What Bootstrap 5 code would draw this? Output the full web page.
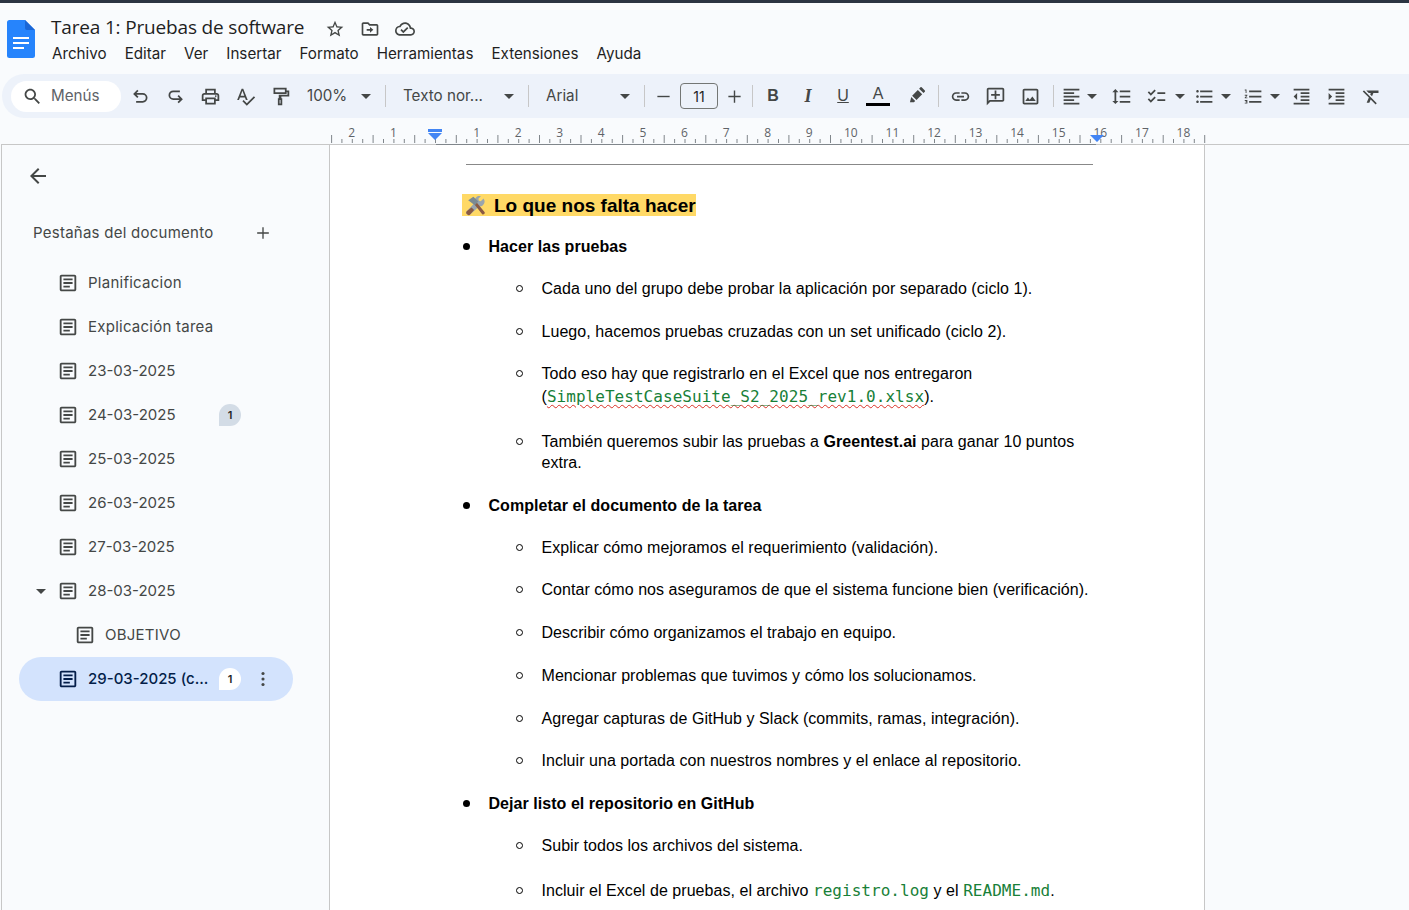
<!DOCTYPE html>
<html lang="es">
<head>
  <meta charset="UTF-8">
  <meta name="viewport" content="width=device-width, initial-scale=1.0">
  <title>Tarea 1: Pruebas de software</title>
  <link href="https://cdn.jsdelivr.net/npm/bootstrap@5.3.0/dist/css/bootstrap.min.css" rel="stylesheet">
  <style>
    html, body { height: 100%; }
    body { background: #f9fbfd; overflow: hidden; font-family: Inter, "Open Sans", sans-serif; color: #444746; border-top: 3px solid #2b3442; }
    .ico { width: 21px; height: 21px; fill: #444746; flex: none; display: block; }

    /* cabecera */
    .top-head { height: 71px; }
    .logo-box { width: 51px; padding: 17px 0 0 7px; }
    .doc-logo { width: 28px; height: 38px; display: block; }
    .doc-title { font-family: "Open Sans", sans-serif; font-size: 19px; line-height: 24px; color: #1f1f1f; margin: 12px 0 0 0; font-weight: 400; letter-spacing: -.17px; }
    .title-icons { margin-left: 21px; gap: 15px; margin-top: 16px; }
    .title-icons .ico { width: 20px; height: 20px; }
    .menu-row { gap: 18px; margin: 5px 0 0 1px; font-size: 15.2px; line-height: 20px; color: #1f1f1f; }

    /* barra de herramientas */
    .tool-bar { height: 44px; margin-left: 2px; background: #edf2fa; border-radius: 22px 0 0 22px; }
    .search-pill { width: 110px; height: 31px; margin: 0 1.5px 0 9px; background: #fff; border-radius: 16px; padding-left: 11px; font-size: 15.2px; color: #5f6368; gap: 8px; }
    .tool-btn { width: 35px; height: 44px; flex: none; }
    .tool-narrow { width: 24px; }
    .caret-down { width: 0; height: 0; border-left: 5px solid transparent; border-right: 5px solid transparent; border-top: 5px solid #444746; flex: none; }
    .tool-sep { width: 1px; height: 22px; background: #c7c7c7; flex: none; }
    .drop-box { height: 44px; font-size: 15.2px; flex: none; padding-right: 5px; }
    .drop-zoom { width: 78.5px; padding-left: 9.5px; }
    .drop-style { width: 124px; padding-left: 8px; margin-left: 9px; }
    .drop-font { width: 97px; padding-left: 8px; margin-left: 9px; }
    .sep-a { margin-left: 9px; }
    .size-step { width: 18px; height: 44px; flex: none; }
    .step-minus { margin-left: 9px; }
    .step-plus { margin-left: 7px; }
    .size-box { width: 38px; height: 26px; margin-left: 8px; border: 1px solid #747775; border-radius: 4px; font-size: 14px; color: #1f1f1f; flex: none; }
    .fmt-letter { font-family: "Liberation Sans", Arial, sans-serif; font-size: 16px; color: #444746; }
    .fmt-italic { font-family: "Liberation Serif", serif; font-size: 18px; }
    .color-a { line-height: 16px; border-bottom: 3px solid #000; width: 24px; text-align: center; padding-bottom: 1px; }
    .ms-b { margin-left: 2.5px; }
    .ms-hl { margin-left: 3px; }
    .ms-c { margin-left: 4.5px; }
    .ms-c2 { margin-left: 3.5px; }
    .ms-d { margin-left: 5.5px; }
    .ms-e { margin-left: 5.5px; }
    .ms-g { margin-left: 7px; }
    .ms-h { margin-left: 1px; }
    .ms-i { margin-left: 7.5px; }
    .ms-i2 { margin-left: 10px; }
    .ms-k { margin-left: 3.5px; }
    .caret-gap { margin-left: 3px; }
    .caret-gap-b { margin-left: 5px; }

    /* regla */
    .ruler-wrap { height: 27px; flex: none; }
    .ruler-svg { display: block; width: 1409px; height: 27px; }
    .ruler-svg text { font-family: "Open Sans", sans-serif; font-size: 12px; fill: #5f6368; text-anchor: middle; }

    /* panel lateral */
    .work-area { height: calc(100% - 142px); }
    .side-panel { width: 329px; margin-left: 1px; border-left: 1px solid #c7c7c7; border-right: 1px solid #c7c7c7; flex: none; font-size: 15px; }
    .back-box { height: 61px; padding: 19px 0 0 24px; }
    .back-box .ico { width: 24px; height: 24px; }
    .tabs-head { height: 52px; padding: 2px 56px 0 31px; font-size: 15px; margin-bottom: 3px; }
    .plus-sign { width: 20px; height: 20px; }
    .name-wide { letter-spacing: .25px; }
    .tab-row { height: 44px; padding-left: 55px; gap: 9px; color: #444746; white-space: nowrap; }
    .tab-row .ico { width: 22px; height: 22px; }
    .tab-open { padding-left: 34px; }
    .tab-open .caret-down { margin-right: 2px; }
    .tab-child { padding-left: 72px; }
    .tab-text { width: 122px; }
    .note-badge { width: 22px; height: 22px; background: #d3dce6; border-radius: 50% 50% 50% 0; font-size: 11px; font-weight: 600; color: #1f1f1f; flex: none; }
    .tab-active { margin-left: 17px; width: 274px; padding-left: 38px; background: #d3e3fd; border-radius: 22px; color: #041e49; font-weight: 500; }
    .tab-active .ico { fill: #041e49; }
    .tab-active .note-badge { background: #fff; }
    .tab-row .dots-btn { margin-left: 2px; width: 22px; height: 22px; fill: #444746; }

    /* hoja */
    .doc-page { width: 875px; background: #fff; border-right: 1px solid #c7c7c7; padding: 19px 111px 0 132px; flex: none; font-family: "Liberation Sans", Arial, sans-serif; font-size: 16px; letter-spacing: .05px; color: #000; overflow: hidden; }
    .doc-rule { height: 1px; background: #888; margin: 0 0 29px 4px; }
    .doc-heading { display: inline-flex; align-items: center; height: 22px; background: #ffd966; font-weight: 700; font-size: 19px; letter-spacing: 0; line-height: 22px; padding: 1px 0 0 4px; margin-bottom: 20px; }
    .tools-emoji { width: 20px; height: 20px; margin-right: 8px; flex: none; }
    .doc-list, .doc-sub { list-style: none; margin: 0; padding: 0; }
    .doc-list > li { padding-left: 26.5px; font-weight: 700; line-height: 21px; margin-bottom: 21px; }
    .doc-list > li::before { content: ""; display: inline-block; width: 7px; height: 7px; border-radius: 50%; background: #000; margin: 0 18.5px 2px -25.5px; }
    .doc-sub { margin-top: 21px; font-weight: 400; }
    .doc-sub > li { padding-left: 53px; margin-bottom: 21.7px; line-height: 21px; }
    .doc-sub > li::before { content: ""; display: inline-block; width: 7px; height: 7px; border-radius: 50%; border: 1px solid #000; margin: 0 18.5px 2px -25.5px; }
    .code-txt { font-family: "DejaVu Sans Mono", "Liberation Mono", monospace; font-size: 16px; letter-spacing: .04px; line-height: 25px; color: #188038; }
    .spell-err { text-decoration: underline wavy #d93025 1px; text-underline-offset: 2px; }
  </style>
</head>
<body>
  <svg width="0" height="0" class="d-none">
    <symbol id="i-search" viewBox="0 0 24 24"><path d="M15.5 14h-.79l-.28-.27C15.41 12.59 16 11.11 16 9.5 16 5.91 13.09 3 9.5 3S3 5.91 3 9.5 5.91 16 9.5 16c1.61 0 3.09-.59 4.23-1.57l.27.28v.79l5 4.99L20.49 19l-4.99-5zm-6 0C7.01 14 5 11.99 5 9.5S7.01 5 9.5 5 14 7.01 14 9.5 11.99 14 9.5 14z"/></symbol>
    <symbol id="i-undo" viewBox="0 0 24 24"><path fill="none" stroke="#444746" stroke-width="2" d="M9 5 5 9l4 4M5 9h9.5a4.500 4.500 0 0 1 0 9H7"/></symbol>
    <symbol id="i-redo" viewBox="0 0 24 24"><path fill="none" stroke="#444746" stroke-width="2" d="m15 11 4 4-4 4M19 15H9.500a4.500 4.500 0 0 1 0-9H17"/></symbol>
    <symbol id="i-print" viewBox="0 0 24 24"><path d="M19 8h-1V3H6v5H5c-1.660 0-3 1.340-3 3v6h4v4h12v-4h4v-6c0-1.660-1.340-3-3-3zM8 5h8v3H8V5zm8 12v2H8v-4h8v2zm2-2v-2H6v2H4v-4c0-.55.45-1 1-1h14c.55 0 1 .45 1 1v4h-2z"/><circle cx="18" cy="11.500" r="1"/></symbol>
    <symbol id="i-spell" viewBox="0 0 24 24"><path d="M12.450 16h2.090L9.430 3H7.570L2.460 16h2.090l1.120-3h5.640l1.140 3zm-6.020-5L8.500 5.480 10.570 11H6.430zm15.160.59-8.090 8.090L9.830 16l-1.410 1.410 5.090 5.090L23 13l-1.410-1.410z"/></symbol>
    <symbol id="i-paint" viewBox="0 0 24 24"><path d="M4 2h15v7H4zm2 2v3h11V4zM19 5h3v7h-9v2h1v8H9v-8h1V10h10V7h-1zM11 16v4h1v-4z" fill-rule="evenodd"/></symbol>
    <symbol id="i-star" viewBox="0 0 24 24"><path d="m22 9.240-7.190-.62L12 2 9.190 8.630 2 9.240l5.460 4.730L5.820 21 12 17.270 18.180 21l-1.630-7.030L22 9.240zM12 15.400l-3.760 2.270 1-4.280-3.320-2.880 4.380-.38L12 6.100l1.710 4.040 4.380.38-3.320 2.880 1 4.280L12 15.400z"/></symbol>
    <symbol id="i-move" viewBox="0 0 24 24"><path d="M20 6h-8l-2-2H4c-1.100 0-2 .9-2 2v12c0 1.100.9 2 2 2h16c1.100 0 2-.9 2-2V8c0-1.100-.9-2-2-2zm0 12H4V6h5.170l2 2H20v10zm-8-4H8v-2h4V9.500l4 3.500-4 3.500V14z"/></symbol>
    <symbol id="i-cloud" viewBox="0 0 24 24"><path d="M19.350 10.040C18.670 6.590 15.640 4 12 4 9.110 4 6.600 5.640 5.350 8.040 2.340 8.360 0 10.910 0 14c0 3.310 2.690 6 6 6h13c2.760 0 5-2.240 5-5 0-2.640-2.050-4.780-4.650-4.960zM19 18H6c-2.210 0-4-1.790-4-4 0-2.050 1.530-3.760 3.560-3.970l1.070-.11.5-.95C8.080 7.140 9.940 6 12 6c2.620 0 4.880 1.860 5.390 4.430l.3 1.500 1.530.11c1.560.1 2.780 1.410 2.780 2.960 0 1.650-1.350 3-3 3zm-9-3.820-2.090-2.090L6.500 13.500 10 17l6.010-6.010-1.410-1.410z"/></symbol>
    <symbol id="i-marker" viewBox="0 0 24 24"><path d="m13.500 4.500 5 5-6.500 6.500-5-5zM15 3l1.500-1.500a1 1 0 0 1 1.400 0l3.600 3.600a1 1 0 0 1 0 1.400L20 8zM6 12.500l4.500 4.500-1.500 1.500H4.500z"/></symbol>
    <symbol id="i-link" viewBox="0 0 24 24"><path d="M3.900 12c0-1.710 1.390-3.100 3.100-3.100h4V7H7c-2.760 0-5 2.240-5 5s2.240 5 5 5h4v-1.900H7c-1.710 0-3.100-1.390-3.100-3.100zM8 13h8v-2H8v2zm9-6h-4v1.900h4c1.710 0 3.100 1.390 3.100 3.100s-1.390 3.100-3.100 3.100h-4V17h4c2.760 0 5-2.240 5-5s-2.240-5-5-5z"/></symbol>
    <symbol id="i-comment" viewBox="0 0 24 24"><path d="M20 2H4c-1.100 0-2 .9-2 2v18l4-4h14c1.100 0 2-.9 2-2V4c0-1.100-.9-2-2-2zm0 14H5.170L4 17.170V4h16v12zM11 5h2v4h4v2h-4v4h-2v-4H7V9h4z"/></symbol>
    <symbol id="i-image" viewBox="0 0 24 24"><path d="M19 5v14H5V5h14m0-2H5c-1.100 0-2 .9-2 2v14c0 1.100.9 2 2 2h14c1.100 0 2-.9 2-2V5c0-1.100-.9-2-2-2zm-4.860 8.860-3 3.870L9 13.140 6 17h12l-3.860-5.140z"/></symbol>
    <symbol id="i-align" viewBox="0 0 24 24"><path d="M15 15H3v2h12v-2zm0-8H3v2h12V7zM3 13h18v-2H3v2zm0 8h18v-2H3v2zM3 3v2h18V3H3z"/></symbol>
    <symbol id="i-spacing" viewBox="0 0 24 24"><path d="M6 7h2.500L5 3.500 1.500 7H4v10H1.500L5 20.500 8.500 17H6V7zm4-2v2h12V5H10zm0 14h12v-2H10v2zm0-6h12v-2H10v2z"/></symbol>
    <symbol id="i-check" viewBox="0 0 24 24"><path d="M22 7h-9v2h9V7zm0 8h-9v2h9v-2zM5.540 11 2 7.460l1.410-1.410 2.120 2.120 4.240-4.240 1.410 1.410L5.540 11zm0 8L2 15.460l1.410-1.410 2.120 2.120 4.240-4.240 1.410 1.410L5.540 19z"/></symbol>
    <symbol id="i-bullets" viewBox="0 0 24 24"><path d="M4 10.500c-.83 0-1.500.67-1.500 1.500s.67 1.500 1.500 1.500 1.500-.67 1.500-1.500-.67-1.500-1.500-1.500zm0-6c-.83 0-1.500.67-1.500 1.500S3.170 7.500 4 7.500 5.500 6.830 5.500 6 4.830 4.500 4 4.500zm0 12c-.83 0-1.500.68-1.500 1.500s.68 1.500 1.500 1.500 1.500-.68 1.500-1.500-.67-1.500-1.500-1.500zM7 19h14v-2H7v2zm0-6h14v-2H7v2zm0-8v2h14V5H7z"/></symbol>
    <symbol id="i-number" viewBox="0 0 24 24"><path d="M2 17h2v.5H3v1h1v.5H2v1h3v-4H2v1zm1-9h1V4H2v1h1v3zm-1 3h1.800L2 13.100v.9h3v-1H3.200L5 10.900V10H2v1zm5-6v2h14V5H7zm0 14h14v-2H7v2zm0-6h14v-2H7v2z"/></symbol>
    <symbol id="i-outdent" viewBox="0 0 24 24"><path d="M11 17h10v-2H11v2zm-8-5 4 4V8l-4 4zm0 9h18v-2H3v2zM3 3v2h18V3H3zm8 6h10V7H11v2zm0 4h10v-2H11v2z"/></symbol>
    <symbol id="i-indent" viewBox="0 0 24 24"><path d="M3 21h18v-2H3v2zM3 8v8l4-4-4-4zm8 9h10v-2H11v2zM3 3v2h18V3H3zm8 6h10V7H11v2zm0 4h10v-2H11v2z"/></symbol>
    <symbol id="i-clear" viewBox="0 0 24 24"><path d="M3.270 5 2 6.270l6.970 6.970L6.500 19h3l1.570-3.660L16.730 21 18 19.730 3.550 5.270 3.270 5zM6 5v.18L8.820 8h2.400l-.72 1.680 2.100 2.100L14.210 8H20V5H6z"/></symbol>
    <symbol id="i-tab" viewBox="0 0 24 24"><path d="M19 5v14H5V5h14m0-2H5c-1.100 0-2 .9-2 2v14c0 1.100.9 2 2 2h14c1.100 0 2-.9 2-2V5c0-1.100-.9-2-2-2zM7 7h10v2H7zM7 11h10v2H7zM7 15h7v2H7z"/></symbol>
    <symbol id="i-back" viewBox="0 0 24 24"><path d="M20 11H7.830l5.590-5.590L12 4l-8 8 8 8 1.410-1.410L7.830 13H20v-2z"/></symbol>
    <symbol id="i-plus" viewBox="0 0 24 24"><path d="M19 12.800h-6.200V19h-1.600v-6.200H5v-1.600h6.200V5h1.600v6.200H19z"/></symbol>
    <symbol id="i-minus" viewBox="0 0 24 24"><path d="M5 11.200h14v1.600H5z"/></symbol>
    <symbol id="i-dots" viewBox="0 0 24 24"><circle cx="12" cy="6" r="1.700"/><circle cx="12" cy="12" r="1.700"/><circle cx="12" cy="18" r="1.700"/></symbol>
  </svg>

  <header class="top-head d-flex">
    <div class="logo-box">
      <svg class="doc-logo" viewBox="0 0 28 38">
        <path fill="#2684fc" d="M2.500 0H18l10 10v25.500a2.500 2.500 0 0 1-2.500 2.500h-23A2.500 2.500 0 0 1 0 35.500v-33A2.500 2.500 0 0 1 2.500 0z"/>
        <path fill="#1a66d6" d="M18 0l10 10H20a2 2 0 0 1-2-2z"/>
        <path fill="#fff" d="M6 17h16v2H6zM6 22h16v2H6zM6 27h11v2H6z"/>
      </svg>
    </div>
    <div>
      <div class="d-flex align-items-start">
        <h1 class="doc-title">Tarea 1: Pruebas de software</h1>
        <div class="title-icons d-flex">
          <svg class="ico"><use href="#i-star"/></svg>
          <svg class="ico"><use href="#i-move"/></svg>
          <svg class="ico"><use href="#i-cloud"/></svg>
        </div>
      </div>
      <nav class="menu-row d-flex">
        <span>Archivo</span><span>Editar</span><span>Ver</span><span>Insertar</span><span>Formato</span><span>Herramientas</span><span>Extensiones</span><span>Ayuda</span>
      </nav>
    </div>
  </header>

  <div class="tool-bar d-flex align-items-center">
    <div class="search-pill d-flex align-items-center">
      <svg class="ico"><use href="#i-search"/></svg><span>Menús</span>
    </div>
    <div class="tool-btn d-flex align-items-center justify-content-center"><svg class="ico"><use href="#i-undo"/></svg></div>
    <div class="tool-btn d-flex align-items-center justify-content-center"><svg class="ico"><use href="#i-redo"/></svg></div>
    <div class="tool-btn d-flex align-items-center justify-content-center"><svg class="ico"><use href="#i-print"/></svg></div>
    <div class="tool-btn d-flex align-items-center justify-content-center"><svg class="ico"><use href="#i-spell"/></svg></div>
    <div class="tool-btn d-flex align-items-center justify-content-center"><svg class="ico"><use href="#i-paint"/></svg></div>
    <div class="drop-box drop-zoom d-flex align-items-center justify-content-between"><span>100%</span><i class="caret-down"></i></div>
    <div class="tool-sep sep-a"></div>
    <div class="drop-box drop-style d-flex align-items-center justify-content-between"><span>Texto nor...</span><i class="caret-down"></i></div>
    <div class="tool-sep sep-a"></div>
    <div class="drop-box drop-font d-flex align-items-center justify-content-between"><span>Arial</span><i class="caret-down"></i></div>
    <div class="tool-sep sep-a"></div>
    <div class="size-step step-minus d-flex align-items-center justify-content-center"><svg class="ico"><use href="#i-minus"/></svg></div>
    <div class="size-box d-flex align-items-center justify-content-center">11</div>
    <div class="size-step step-plus d-flex align-items-center justify-content-center"><svg class="ico"><use href="#i-plus"/></svg></div>
    <div class="tool-sep sep-a"></div>
    <div class="tool-btn ms-b d-flex align-items-center justify-content-center fmt-letter"><b>B</b></div>
    <div class="tool-btn d-flex align-items-center justify-content-center fmt-letter fmt-italic"><b><i>I</i></b></div>
    <div class="tool-btn d-flex align-items-center justify-content-center fmt-letter"><u>U</u></div>
    <div class="tool-btn d-flex align-items-center justify-content-center fmt-letter"><div class="color-a">A</div></div>
    <div class="tool-btn ms-hl d-flex align-items-center justify-content-center"><svg class="ico"><use href="#i-marker"/></svg></div>
    <div class="tool-sep ms-c"></div>
    <div class="tool-btn ms-c2 d-flex align-items-center justify-content-center"><svg class="ico"><use href="#i-link"/></svg></div>
    <div class="tool-btn d-flex align-items-center justify-content-center"><svg class="ico"><use href="#i-comment"/></svg></div>
    <div class="tool-btn d-flex align-items-center justify-content-center"><svg class="ico"><use href="#i-image"/></svg></div>
    <div class="tool-sep ms-d"></div>
    <div class="tool-btn tool-narrow ms-e d-flex align-items-center justify-content-center"><svg class="ico"><use href="#i-align"/></svg></div>
    <i class="caret-down caret-gap"></i>
    <div class="tool-btn ms-g d-flex align-items-center justify-content-center"><svg class="ico"><use href="#i-spacing"/></svg></div>
    <div class="tool-btn d-flex align-items-center justify-content-center"><svg class="ico"><use href="#i-check"/></svg></div>
    <i class="caret-down ms-h"></i>
    <div class="tool-btn tool-narrow ms-i d-flex align-items-center justify-content-center"><svg class="ico"><use href="#i-bullets"/></svg></div>
    <i class="caret-down caret-gap-b"></i>
    <div class="tool-btn tool-narrow ms-i2 d-flex align-items-center justify-content-center"><svg class="ico"><use href="#i-number"/></svg></div>
    <i class="caret-down caret-gap-b"></i>
    <div class="tool-btn ms-k d-flex align-items-center justify-content-center"><svg class="ico"><use href="#i-outdent"/></svg></div>
    <div class="tool-btn d-flex align-items-center justify-content-center"><svg class="ico"><use href="#i-indent"/></svg></div>
    <div class="tool-btn d-flex align-items-center justify-content-center"><svg class="ico"><use href="#i-clear"/></svg></div>
  </div>

  <div class="ruler-wrap"><svg class="ruler-svg" id="ruler"></svg></div>

  <div class="work-area d-flex">
    <aside class="side-panel">
      <div class="back-box"><svg class="ico"><use href="#i-back"/></svg></div>
      <div class="tabs-head d-flex align-items-center justify-content-between">
        <span class="name-wide">Pestañas del documento</span>
        <svg class="ico plus-sign"><use href="#i-plus"/></svg>
      </div>
      <div class="tab-row d-flex align-items-center"><svg class="ico"><use href="#i-tab"/></svg><span class="name-wide">Planificacion</span></div>
      <div class="tab-row d-flex align-items-center"><svg class="ico"><use href="#i-tab"/></svg><span class="name-wide">Explicación tarea</span></div>
      <div class="tab-row d-flex align-items-center"><svg class="ico"><use href="#i-tab"/></svg><span>23-03-2025</span></div>
      <div class="tab-row d-flex align-items-center"><svg class="ico"><use href="#i-tab"/></svg><span class="tab-text">24-03-2025</span><span class="note-badge d-flex align-items-center justify-content-center">1</span></div>
      <div class="tab-row d-flex align-items-center"><svg class="ico"><use href="#i-tab"/></svg><span>25-03-2025</span></div>
      <div class="tab-row d-flex align-items-center"><svg class="ico"><use href="#i-tab"/></svg><span>26-03-2025</span></div>
      <div class="tab-row d-flex align-items-center"><svg class="ico"><use href="#i-tab"/></svg><span>27-03-2025</span></div>
      <div class="tab-row tab-open d-flex align-items-center"><i class="caret-down"></i><svg class="ico"><use href="#i-tab"/></svg><span>28-03-2025</span></div>
      <div class="tab-row tab-child d-flex align-items-center"><svg class="ico"><use href="#i-tab"/></svg><span class="name-wide">OBJETIVO</span></div>
      <div class="tab-row tab-active d-flex align-items-center"><svg class="ico"><use href="#i-tab"/></svg><span class="tab-text">29-03-2025 (c...</span><span class="note-badge d-flex align-items-center justify-content-center">1</span><svg class="ico dots-btn"><use href="#i-dots"/></svg></div>
    </aside>

    <main class="doc-page">
      <div class="doc-rule"></div>
      <div class="doc-heading">
        <svg class="tools-emoji" viewBox="0 0 20 20">
          <path fill="#9aa5ad" d="M17.500 2.500l-2.700 2.700-1.900-.5-.5-1.900L15 0a5 5 0 0 0-6 6.500L1 15a2.300 2.300 0 0 0 3.400 3.300L13 10.500a5 5 0 0 0 4.500-8z"/>
          <path fill="#8a5a44" d="M5.500 11.500l2.600 2.500-3.700 4.300A2.300 2.300 0 0 1 1 15z"/>
          <path fill="#8a5a44" d="M8.500 8.400l2.200-2 8 9.800a1.700 1.700 0 0 1-2.500 2z"/>
          <path fill="#7b8a93" d="M2.200 4.300L7.400.8l5 4.700-3.600 3.700z"/>
        </svg>
        Lo que nos falta hacer
      </div>
      <ul class="doc-list">
        <li>Hacer las pruebas
          <ul class="doc-sub">
            <li>Cada uno del grupo debe probar la aplicación por separado (ciclo 1).</li>
            <li>Luego, hacemos pruebas cruzadas con un set unificado (ciclo 2).</li>
            <li>Todo eso hay que registrarlo en el Excel que nos entregaron<br>(<span class="code-txt spell-err">SimpleTestCaseSuite_S2_2025_rev1.0.xlsx</span>).</li>
            <li>También queremos subir las pruebas a <b>Greentest.ai</b> para ganar 10 puntos extra.</li>
          </ul>
        </li>
        <li>Completar el documento de la tarea
          <ul class="doc-sub">
            <li>Explicar cómo mejoramos el requerimiento (validación).</li>
            <li>Contar cómo nos aseguramos de que el sistema funcione bien (verificación).</li>
            <li>Describir cómo organizamos el trabajo en equipo.</li>
            <li>Mencionar problemas que tuvimos y cómo los solucionamos.</li>
            <li>Agregar capturas de GitHub y Slack (commits, ramas, integración).</li>
            <li>Incluir una portada con nuestros nombres y el enlace al repositorio.</li>
          </ul>
        </li>
        <li>Dejar listo el repositorio en GitHub
          <ul class="doc-sub">
            <li>Subir todos los archivos del sistema.</li>
            <li>Incluir el Excel de pruebas, el archivo <span class="code-txt">registro.log</span> y el <span class="code-txt">README.md</span>.</li>
          </ul>
        </li>
      </ul>
    </main>
  </div>

  <script>
    // regla: marcas cada cuarto de cm, cero en x=435
    const ruler = document.getElementById('ruler');
    const cero = 435, paso = 41.58;
    let svg = '';
    for (let i = -16; i <= 76; i++) {
      const x = cero + i * paso / 4;
      if (x < 330 || x > 1206) continue;
      const medio = Math.abs(i % 4) === 2;
      svg += `<rect x="${x.toFixed(1)}" y="${medio ? 17 : 21}" width="1" height="${medio ? 8 : 4}" fill="#80868b"/>`;
      if (i % 4 === 0 && i !== 0) svg += `<text x="${x.toFixed(1)}" y="19">${Math.abs(i / 4)}</text>`;
    }
    svg += '<rect x="1" y="26" width="1408" height="1" fill="#c7c7c7"/>';
    svg += '<rect x="436" y="26" width="660" height="1" fill="#80868b"/>';
    svg += '<path fill="#4285f4" d="M428 11h14v3h-14zM428 15h14l-7 7zM1090 17h14l-7 7z"/>';
    ruler.innerHTML = svg;
  </script>
  <script src="https://cdn.jsdelivr.net/npm/bootstrap@5.3.0/dist/js/bootstrap.bundle.min.js"></script>
</body>
</html>
